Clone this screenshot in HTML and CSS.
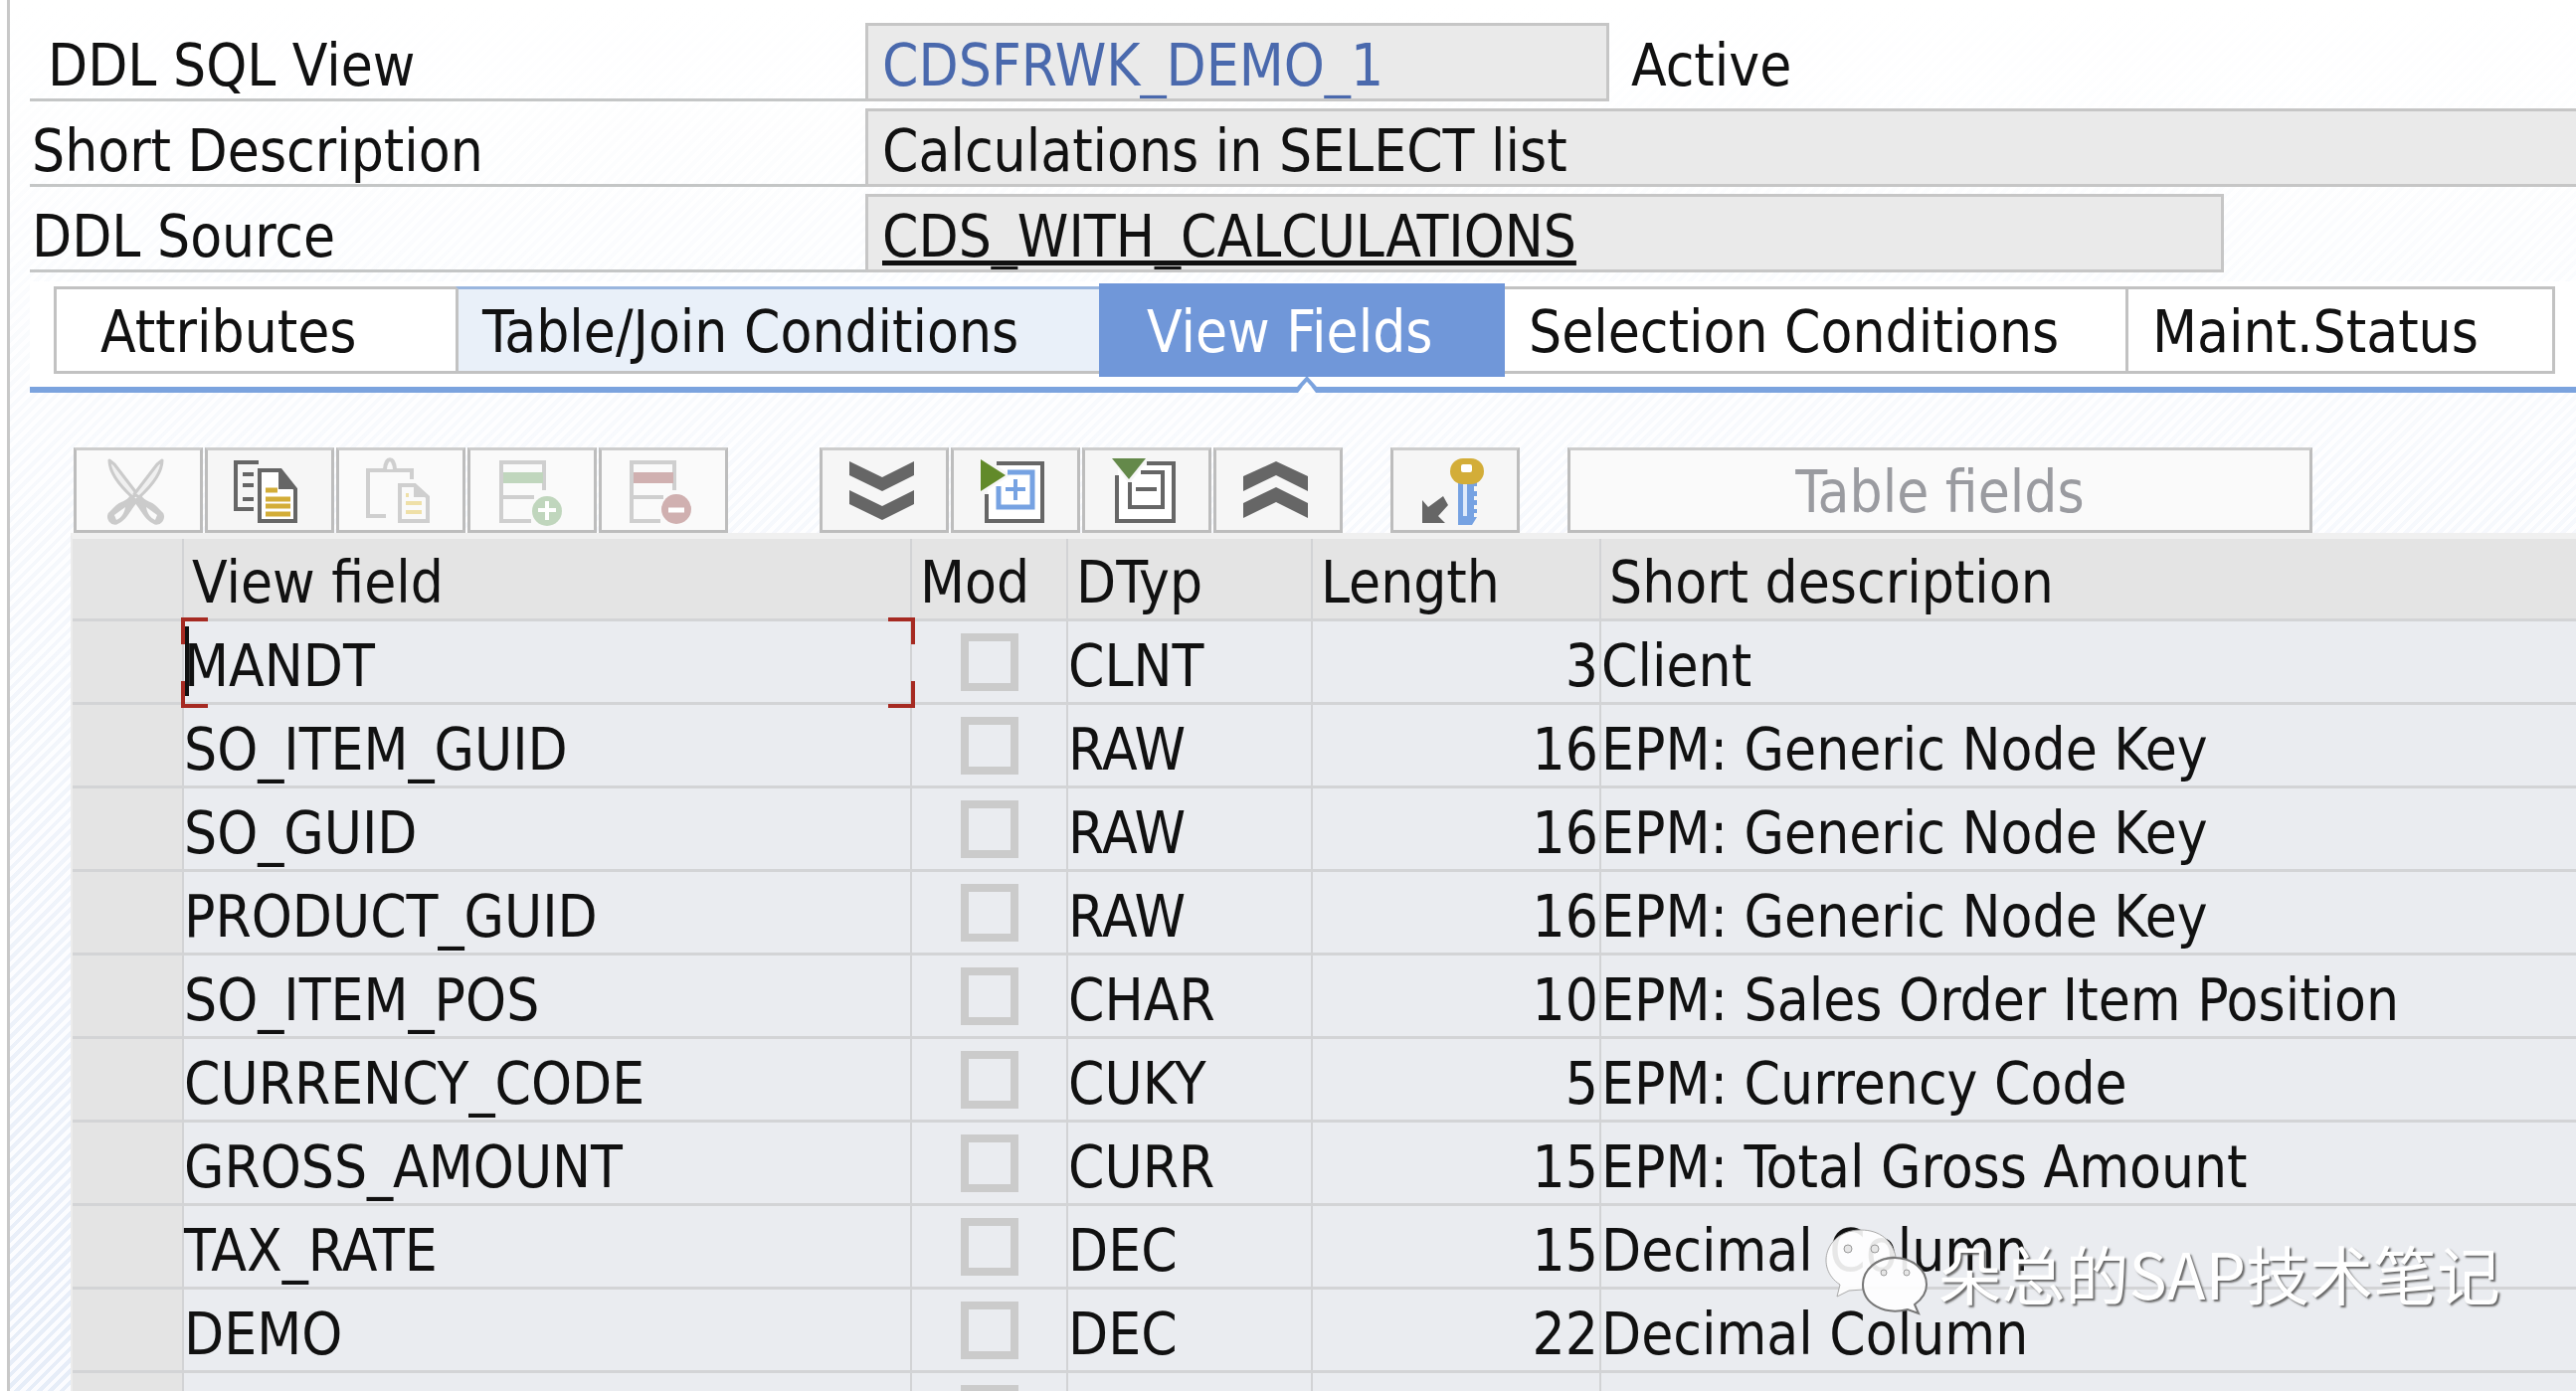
FILE: index.html
```html
<!DOCTYPE html>
<html lang="en">
<head>
<meta charset="utf-8">
<title>DDL SQL View: CDSFRWK_DEMO_1</title>
<link rel="stylesheet" href="styles.css">
</head>
<body>
<main class="screen">
  <form class="header">
    <div class="row">
      <label class="label label-key" for="view">DDL SQL View</label>
      <input class="field field-name" id="view" value="CDSFRWK_DEMO_1" readonly>
      <span class="status">Active</span>
    </div>
    <div class="row">
      <label class="label" for="desc">Short Description</label>
      <input class="field field-desc" id="desc" value="Calculations in SELECT list" readonly>
    </div>
    <div class="row">
      <label class="label" for="source">DDL Source</label>
      <input class="field field-source" id="source" value="CDS_WITH_CALCULATIONS" readonly>
    </div>
  </form>

  <nav class="tabs">
    <button class="tab tab-attributes">Attributes</button>
    <button class="tab tab-joins">Table/Join Conditions</button>
    <button class="tab tab-fields">View Fields</button>
    <button class="tab tab-selection">Selection Conditions</button>
    <button class="tab tab-status">Maint.Status</button>
    <svg class="notch" width="24" height="16" viewBox="0 0 24 16"><path d="M3 16L12 4L21 16Z" fill="#fff"/><path d="M2 13L12 2L22 13" fill="none" stroke="#7ba3de" stroke-width="4"/></svg>
  </nav>

  <div class="toolbar">
    <div class="group">
      <button class="tool" disabled aria-label="Cut"><svg viewBox="0 0 130 86">
        <g id="half" fill="#f0f0f0" stroke="#cbcbcb" stroke-width="3" stroke-linejoin="round">
          <path d="M36 13L41 17L64 47L59 50C46 38 36 25 36 13Z"/>
          <path d="M58 49C54 57 49 54 44 59L36 67C34 72 38 77 43 76C52 73 55 63 63 54Z" fill="#cbcbcb"/>
          <path d="M52 60L41 68L43 73C48 71 51 66 52 60Z" fill="#fafafa" stroke="none"/>
        </g>
        <use href="#half" transform="translate(125 0) scale(-1 1)"/></svg></button>
      <button class="tool" aria-label="Copy"><svg viewBox="0 0 130 86">
        <path d="M54 15H31V62H49" fill="none" stroke="#666" stroke-width="4"/>
        <path d="M38 27H49M38 38H49M38 52H49" stroke="#666" stroke-width="4"/>
        <path d="M55 23H76L91 42V74H55Z" fill="#fff" stroke="#666" stroke-width="4"/>
        <path d="M74 21L93 42H74Z" fill="#666"/>
        <path d="M61 43H73M61 52H86M61 59H86M61 67H86" stroke="#d3ad38" stroke-width="5"/></svg></button>
      <button class="tool" disabled aria-label="Paste"><svg viewBox="0 0 130 86">
        <path d="M50 69H32V23H76V32" fill="none" stroke="#cfcfcf" stroke-width="4"/>
        <path d="M49 22C50 9 58 9 59 22" fill="#fafafa" stroke="#cfcfcf" stroke-width="4"/>
        <path d="M64 38H79L92 50V74H64Z" fill="#fafafa" stroke="#cfcfcf" stroke-width="4"/>
        <path d="M78 36L94 50H78Z" fill="#cfcfcf"/>
        <path d="M70 48H73M70 56H86M70 65H86" stroke="#efe0a8" stroke-width="4"/></svg></button>
      <button class="tool" disabled aria-label="Insert row"><svg viewBox="0 0 130 86">
        <path d="M64 74H34V15H77V43M34 50H67" fill="none" stroke="#cfcfcf" stroke-width="4"/>
        <path d="M36 25H76V36H36Z" fill="#c0d6bd"/>
        <circle cx="80" cy="64" r="15" fill="#c0d6bd"/>
        <path d="M71 63H89M80 54V73" stroke="#fff" stroke-width="4"/></svg></button>
      <button class="tool" disabled aria-label="Delete row"><svg viewBox="0 0 130 86">
        <path d="M62 74H33V15H76V43M33 50H65" fill="none" stroke="#cfcfcf" stroke-width="4"/>
        <path d="M35 25H75V36H35Z" fill="#d0b0b0"/>
        <circle cx="78" cy="62" r="15" fill="#d0b0b0"/>
        <path d="M70 63H86" stroke="#fff" stroke-width="5"/></svg></button>
    </div>
    <div class="group">
      <button class="tool" aria-label="Expand all"><svg viewBox="0 0 130 86">
        <path d="M30 14L63 30L95 14V28L63 44L30 28ZM30 43L63 59L95 43V57L63 73L30 57Z" fill="#666"/></svg></button>
      <button class="tool" aria-label="Expand"><svg viewBox="0 0 130 86">
        <path d="M37 18H92V74H37Z" fill="#fff"/>
        <path d="M46 16H92V74H36V47" fill="none" stroke="#666" stroke-width="4"/>
        <path d="M30 7L60 28L30 47Z" fill="#f6f6f6"/>
        <path d="M57 25H82V60H48V39" fill="none" stroke="#76a2e2" stroke-width="5"/>
        <path d="M55 42H75M65 32V53" stroke="#76a2e2" stroke-width="4"/>
        <path d="M30 12L55 28L30 44Z" fill="#628a2a"/></svg></button>
      <button class="tool" aria-label="Collapse"><svg viewBox="0 0 130 86">
        <path d="M36 18H92V74H36Z" fill="#fff"/>
        <path d="M65 16H92V74H35V28" fill="none" stroke="#666" stroke-width="4"/>
        <path d="M28 9H68L47 37Z" fill="#f6f6f6"/>
        <path d="M59 25H81V60H48V35" fill="none" stroke="#666" stroke-width="4"/>
        <path d="M54 42H75" stroke="#666" stroke-width="4"/>
        <path d="M30 11H64L47 32Z" fill="#64894a"/></svg></button>
      <button class="tool" aria-label="Collapse all"><svg viewBox="0 0 130 86">
        <path d="M30 29L63 14L95 29V44L63 28L30 44ZM30 56L63 40L95 56V71L63 55L30 71Z" fill="#666"/></svg></button>
    </div>
    <div class="group group-key">
      <button class="tool" aria-label="Key fields"><svg viewBox="0 0 130 86">
        <path d="M68 35H87V39H84V44H87V49H84V53H87V58H84V62H87V66H84V70H87L82 78H68Z" fill="#76a2e2"/>
        <path d="M73 36H77V69H73Z" fill="#dfeafa"/>
        <rect x="60" y="11" width="34" height="26" rx="13" fill="#d3ad38"/>
        <rect x="71" y="17" width="11" height="8" rx="2" fill="#fff"/>
        <path d="M32 53L38 60L53 49L58 58L48 69L55 76H32Z" fill="#666"/></svg></button>
    </div>
    <button class="tool tool-text" disabled>Table fields</button>
  </div>

  <table class="grid">
    <colgroup><col class="c-select"><col class="c-field"><col class="c-mod"><col class="c-type"><col class="c-length"><col></colgroup>
    <thead>
      <tr><th></th><th>View field</th><th>Mod</th><th>DTyp</th><th>Length</th><th>Short description</th></tr>
    </thead>
    <tbody>
      <tr><th></th><td class="current">MANDT<span class="caret"></span><span class="focus"></span></td><td><input type="checkbox" disabled aria-label="Mod MANDT"></td><td>CLNT</td><td class="num">3</td><td>Client</td></tr>
      <tr><th></th><td>SO_ITEM_GUID</td><td><input type="checkbox" disabled aria-label="Mod SO_ITEM_GUID"></td><td>RAW</td><td class="num">16</td><td>EPM: Generic Node Key</td></tr>
      <tr><th></th><td>SO_GUID</td><td><input type="checkbox" disabled aria-label="Mod SO_GUID"></td><td>RAW</td><td class="num">16</td><td>EPM: Generic Node Key</td></tr>
      <tr><th></th><td>PRODUCT_GUID</td><td><input type="checkbox" disabled aria-label="Mod PRODUCT_GUID"></td><td>RAW</td><td class="num">16</td><td>EPM: Generic Node Key</td></tr>
      <tr><th></th><td>SO_ITEM_POS</td><td><input type="checkbox" disabled aria-label="Mod SO_ITEM_POS"></td><td>CHAR</td><td class="num">10</td><td>EPM: Sales Order Item Position</td></tr>
      <tr><th></th><td>CURRENCY_CODE</td><td><input type="checkbox" disabled aria-label="Mod CURRENCY_CODE"></td><td>CUKY</td><td class="num">5</td><td>EPM: Currency Code</td></tr>
      <tr><th></th><td>GROSS_AMOUNT</td><td><input type="checkbox" disabled aria-label="Mod GROSS_AMOUNT"></td><td>CURR</td><td class="num">15</td><td>EPM: Total Gross Amount</td></tr>
      <tr><th></th><td>TAX_RATE</td><td><input type="checkbox" disabled aria-label="Mod TAX_RATE"></td><td>DEC</td><td class="num">15</td><td>Decimal Column</td></tr>
      <tr><th></th><td>DEMO</td><td><input type="checkbox" disabled aria-label="Mod DEMO"></td><td>DEC</td><td class="num">22</td><td>Decimal Column</td></tr>
      <tr><th></th><td></td><td><input type="checkbox" disabled aria-label="Mod"></td><td></td><td></td><td></td></tr>
    </tbody>
  </table>
</main>

<div class="watermark">
  <svg width="108" height="96" viewBox="0 0 108 96">
    <g fill="#fff" fill-opacity=".9">
      <path d="M37 6C56 6 69 17 72 33C52 33 37 46 39 66L25 67L13 73L16 61C-10 44 2 6 37 6Z" stroke="#aaa" stroke-width="1"/>
      <path d="M71 34C89 34 103 46 103 61C103 69 98 76 91 81L95 90L84 86C60 92 39 80 39 61C39 46 53 34 71 34Z" stroke="#777" stroke-width="2"/>
    </g>
    <g fill="#e6e6e6" stroke="#999" stroke-width="1"><circle cx="24" cy="25" r="4"/><circle cx="51" cy="25" r="4"/><circle cx="60" cy="49" r="3"/><circle cx="83" cy="49" r="3"/></g>
  </svg>
  <span lang="zh-CN">朵总的SAP技术笔记</span>
</div>
</body>
</html>
```
FILE: styles.css
```css
* { box-sizing: border-box; }

body {
  position: relative;
  height: 100vh;
  margin: 0;
  overflow: hidden;
  background: #fff;
  color: #111;
  font: 58px/68px "DejaVu Sans Condensed", "Noto Sans", sans-serif;
}

input, button { font: inherit; color: inherit; border-radius: 0; margin: 0; }

.screen {
  min-height: 100vh;
  margin-left: 7px;
  border-left: 3px solid #c8c8c8;
  background:
    linear-gradient(#fff, rgba(255, 255, 255, .75) 30%, rgba(255, 255, 255, .1)),
    repeating-linear-gradient(135deg, #e2eaf7 0 4px, #fbfcff 4px 8px);
}

/* Header fields */
.header {
  display: flex;
  flex-direction: column;
  gap: 7px;
  padding: 23px 0 9px 20px;
}
.row { display: flex; height: 79px; }
.label {
  flex: 0 0 840px;
  padding: 9px 0 0 2px;
  border-bottom: 3px solid #c4c6c6;
}
.label-key { padding-left: 18px; }
.field {
  min-width: 0;
  padding: 6px 14px 0;
  border: 3px solid #c6c6c6;
  background: #eaeaea;
  outline: 0;
}
.field-name { flex: 0 1 748px; color: #4a69ad; }
.field-desc { flex: 1; border-right: 0; }
.field-source {
  flex: 0 1 1366px;
  text-decoration: underline 5px;
  text-underline-offset: 4px;
  text-decoration-skip-ink: none;
}
.status { padding: 9px 0 0 22px; }

/* Tab strip */
.tabs {
  position: relative;
  display: flex;
  align-items: center;
  height: 112px;
  margin-left: 20px;
  padding: 0 21px 8px 24px;
  border-bottom: 6px solid #7ba3de;
  background: #fff;
}
.tab {
  height: 88px;
  padding: 4px 0 0 24px;
  border: 3px solid #c2c2c2;
  border-right-width: 0;
  background: #fff;
  text-align: left;
  white-space: nowrap;
}
.tab-attributes { flex: 1 1 404px; padding-left: 44px; }
.tab-joins { flex: 1 1 647px; border-top-color: #9ab6de; background: #e9f0f9; }
.tab-fields { flex: 1 1 408px; height: 94px; padding-left: 48px; border: 0; background: #7097d9; color: #fff; }
.tab-selection { flex: 1 1 624px; border-left: 0; }
.tab-status { flex: 1 1 432px; border-right-width: 3px; }
.notch { position: absolute; left: calc(50% - 8px); bottom: -6px; }

/* Toolbar */
.toolbar {
  display: flex;
  padding: 55px 0 0 64px;
}
.group { display: flex; gap: 2px; margin-right: 92px; }
.group + .group { margin-right: 48px; }
.tool {
  width: 130px;
  height: 86px;
  padding: 0;
  border: 3px solid #bdbdbd;
  border-top-color: #cdcdcd;
  background: #f6f6f6;
}
.tool:disabled { background: #fafafa; color: #9a9ba0; }
.tool svg { display: block; width: 130px; height: 86px; margin: -3px; }
.tool-text { flex: 0 1 749px; padding-top: 4px; }

/* Field list */
.grid {
  width: calc(100% - 61px);
  margin-left: 61px;
  table-layout: fixed;
  border-collapse: separate;
  border-spacing: 0;
  border-top: 6px solid #f0f0f0;
  border-left: 2px solid #ececec;
}
.c-select { width: 112px; }
.c-field { width: 732px; }
.c-mod { width: 157px; }
.c-type { width: 246px; }
.c-length { width: 290px; }
.grid th, .grid td {
  padding: 11px 0 2px;
  border-right: 2px solid #d2d3d5;
  border-bottom: 3px solid #d3d4d6;
  font-weight: 400;
  text-align: left;
  white-space: nowrap;
}
.grid th { background: #e4e4e4; }
.grid thead th { padding: 10px 0 2px 8px; }
.grid td { height: 84px; background: #eaecf0; }
.grid tr > :last-child { border-right: 0; }
.grid .num { padding-right: 1px; text-align: right; }
.grid input {
  display: block;
  appearance: none;
  width: 58px;
  height: 58px;
  margin: 0 auto;
  border: 8px solid #cbcbcb;
  background: #eaecf0;
}
.grid td:nth-child(3) { padding: 0; }

.current { position: relative; }
.caret {
  position: absolute;
  left: 1px;
  top: 5px;
  bottom: 6px;
  width: 4px;
  background: #111;
}
/* Red corner brackets round the current cell */
.focus {
  --c: linear-gradient(#a62a22, #a62a22);
  position: absolute;
  inset: -4px -5px -6px -3px;
  background:
    var(--c) 0 0 / 27px 4px, var(--c) 0 0 / 4px 27px,
    var(--c) 100% 0 / 27px 4px, var(--c) 100% 0 / 4px 27px,
    var(--c) 0 100% / 27px 4px, var(--c) 0 100% / 4px 27px,
    var(--c) 100% 100% / 27px 4px, var(--c) 100% 100% / 4px 27px;
  background-repeat: no-repeat;
}

.watermark {
  position: absolute;
  right: 76px;
  bottom: 72px;
  display: flex;
  align-items: center;
  gap: 6px;
  color: #fff;
  font: 64px/90px "Noto Sans CJK SC", sans-serif;
  text-shadow: 2px 2px 2px #666;
}
```
